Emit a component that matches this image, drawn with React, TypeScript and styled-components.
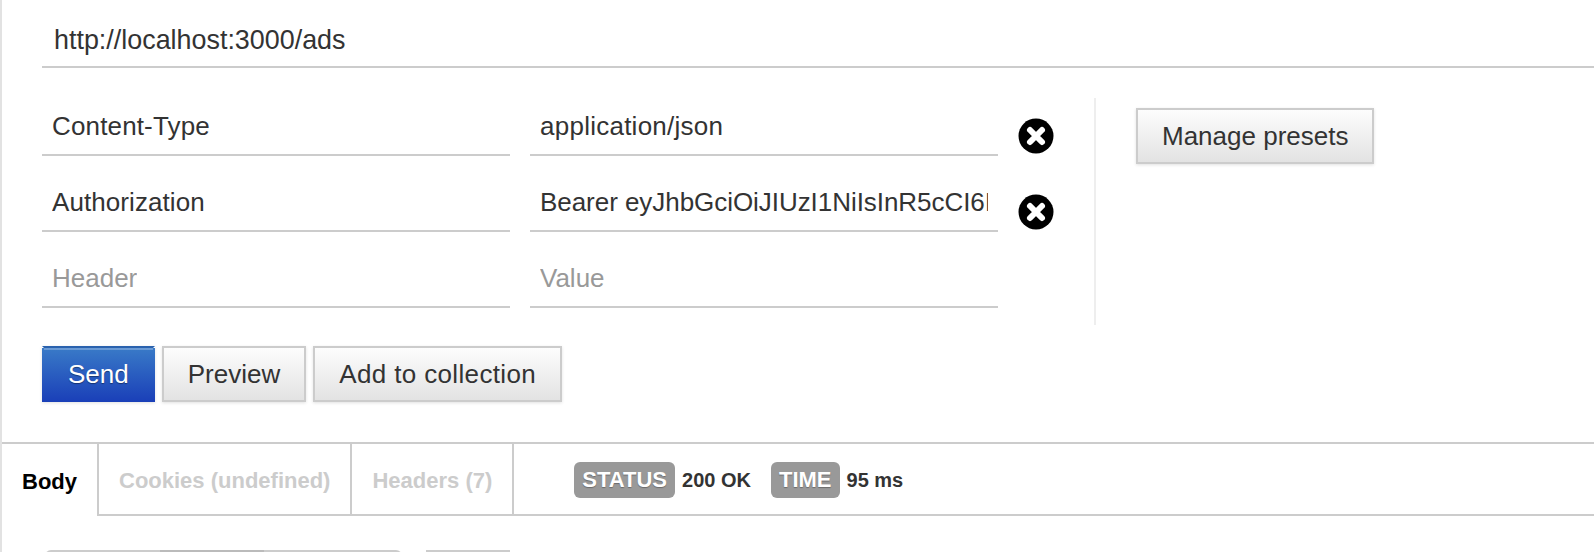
import styled, { createGlobalStyle } from 'styled-components';

const GlobalStyle = createGlobalStyle`
  html, body {
    margin: 0;
    padding: 0;
    background-color: white;
  }
  * {
    box-sizing: border-box;
  }
`;

const Page = styled.div`
  width: 1594px;
  height: 552px;
  overflow: hidden;
  border-left: 2px solid #e2e2e2;
  font-family: 'Liberation Sans', Arial, sans-serif;
  color: #333;
`;

const Request = styled.div`
  padding: 12px 0 40px 40px;
`;

const Field = styled.div<{ $width?: number; $placeholder?: boolean }>`
  width: ${(p) => (p.$width ? `${p.$width}px` : 'auto')};
  height: 56px;
  padding: 0 10px 2px;
  display: flex;
  align-items: center;
  border-bottom: 2px solid #ccc;
  font-size: 26px;
  color: ${(p) => (p.$placeholder ? '#999' : '#333')};
`;

const FieldText = styled.div<{ $tracking?: number }>`
  overflow: hidden;
  white-space: nowrap;
  letter-spacing: ${(p) => p.$tracking ?? 0}px;
`;

const UrlField = styled(Field)`
  padding: 2px 10px 0 12px;
  font-size: 26.9px;
`;

const Config = styled.div`
  display: flex;
  margin-top: 30px;
`;

const Headers = styled.div`
  display: flex;
  flex-direction: column;
  gap: 20px;
  padding-top: 2px;
  width: 1054px;
  height: 227px;
  border-right: 2px solid #eee;
`;

const HeaderRow = styled.div`
  display: flex;
  align-items: center;
  gap: 20px;
`;

const RemoveButton = styled.button`
  width: 36px;
  height: 36px;
  margin-top: 15px;
  padding: 0;
  border: none;
  background: none;
  svg {
    display: block;
  }
`;

const Presets = styled.div`
  padding: 10px 0 0 40px;
`;

const Button = styled.button<{ $primary?: boolean; $tracking?: number }>`
  height: 56px;
  padding: 0 24px;
  font-family: inherit;
  font-size: 26px;
  letter-spacing: ${(p) => p.$tracking ?? 0}px;
  color: ${(p) => (p.$primary ? 'white' : '#333')};
  background: ${(p) =>
    p.$primary
      ? 'linear-gradient(#3a7cc8, #1a3fb8)'
      : 'linear-gradient(#fefefe, #e2e2e2)'};
  background-origin: border-box;
  border: 2px solid ${(p) => (p.$primary ? 'transparent' : '#ccc')};
  border-top-color: ${(p) => (p.$primary ? '#2a62ae' : '#ccc')};
  box-shadow: 0 1px 3px rgba(0, 0, 0, 0.12)
    ${(p) => (p.$primary ? ', inset 0 2px 0 rgba(255, 255, 255, 0.25)' : '')};
  text-shadow: ${(p) =>
    p.$primary ? '0 1px 1px rgba(0, 0, 0, 0.4)' : 'none'};
`;

const Actions = styled.div`
  display: flex;
  gap: 7px;
  margin-top: 21px;
`;

const TabBar = styled.div`
  display: flex;
  height: 74px;
  border-top: 2px solid #ccc;
`;

const Tab = styled.div<{ $active?: boolean }>`
  display: flex;
  align-items: center;
  padding: 3px 20px 0;
  font-size: 22px;
  font-weight: bold;
  color: ${(p) => (p.$active ? 'black' : '#ccc')};
  border-right: 2px solid #ccc;
  border-bottom: ${(p) => (p.$active ? 'none' : '2px solid #ccc')};
`;

const Stats = styled.div`
  flex: 1;
  display: flex;
  align-items: center;
  padding: 2px 0 0 60px;
  border-bottom: 2px solid #ccc;
  font-size: 20px;
  font-weight: bold;
`;

const Badge = styled.span`
  height: 36px;
  padding: 0 8px;
  display: flex;
  align-items: center;
  margin-right: 7px;
  background-color: #999;
  border-radius: 6px;
  color: white;
  font-size: 22px;
  text-shadow: 0 1px 1px rgba(0, 0, 0, 0.3);
`;

const StatValue = styled.span`
  margin-right: 20px;
`;

const Toolbar = styled.div`
  display: flex;
  gap: 24px;
  margin: 34px 0 0 43px;
`;

const Segments = styled.div`
  display: flex;
  width: 357px;
  height: 40px;
  border-radius: 6px 6px 0 0;
  overflow: hidden;
`;

const Segment = styled.div<{ $width: number; $selected?: boolean }>`
  width: ${(p) => p.$width}px;
  border-top: 2px solid ${(p) => (p.$selected ? '#bbb' : '#ccc')};
`;

const ToolButton = styled.div`
  width: 84px;
  height: 40px;
  border-top: 2px solid #ccc;
`;

function RemoveIcon() {
  return (
    <svg width="36" height="36" viewBox="0 0 36 36">
      <circle cx="18" cy="18" r="17.5" fill="black" />
      <path
        d="M12 12L24 24M24 12L12 24"
        stroke="white"
        strokeWidth="6"
        strokeLinecap="round"
      />
    </svg>
  );
}

const token = 'Bearer eyJhbGciOiJIUzI1NiIsInR5cCI6IkpXVCJ9';

function App() {
  return (
    <Page>
      <GlobalStyle />
      <Request>
        <UrlField>
          <FieldText>http://localhost:3000/ads</FieldText>
        </UrlField>
        <Config>
          <Headers>
            <HeaderRow>
              <Field $width={468}>
                <FieldText $tracking={0.15}>Content-Type</FieldText>
              </Field>
              <Field $width={468}>
                <FieldText $tracking={0.25}>application/json</FieldText>
              </Field>
              <RemoveButton>
                <RemoveIcon />
              </RemoveButton>
            </HeaderRow>
            <HeaderRow>
              <Field $width={468}>
                <FieldText $tracking={0.08}>Authorization</FieldText>
              </Field>
              <Field $width={468}>
                <FieldText $tracking={-0.05}>{token}</FieldText>
              </Field>
              <RemoveButton>
                <RemoveIcon />
              </RemoveButton>
            </HeaderRow>
            <HeaderRow>
              <Field $width={468} $placeholder>
                <FieldText>Header</FieldText>
              </Field>
              <Field $width={468} $placeholder>
                <FieldText>Value</FieldText>
              </Field>
            </HeaderRow>
          </Headers>
          <Presets>
            <Button>Manage presets</Button>
          </Presets>
        </Config>
        <Actions>
          <Button $primary>Send</Button>
          <Button>Preview</Button>
          <Button $tracking={0.36}>Add to collection</Button>
        </Actions>
      </Request>
      <TabBar>
        <Tab $active>Body</Tab>
        <Tab>Cookies (undefined)</Tab>
        <Tab>Headers (7)</Tab>
        <Stats>
          <Badge>STATUS</Badge>
          <StatValue>200 OK</StatValue>
          <Badge>TIME</Badge>
          <StatValue>95 ms</StatValue>
        </Stats>
      </TabBar>
      <Toolbar>
        <Segments>
          <Segment $width={115} />
          <Segment $width={104} $selected />
          <Segment $width={138} />
        </Segments>
        <ToolButton />
      </Toolbar>
    </Page>
  );
}

export default App;
